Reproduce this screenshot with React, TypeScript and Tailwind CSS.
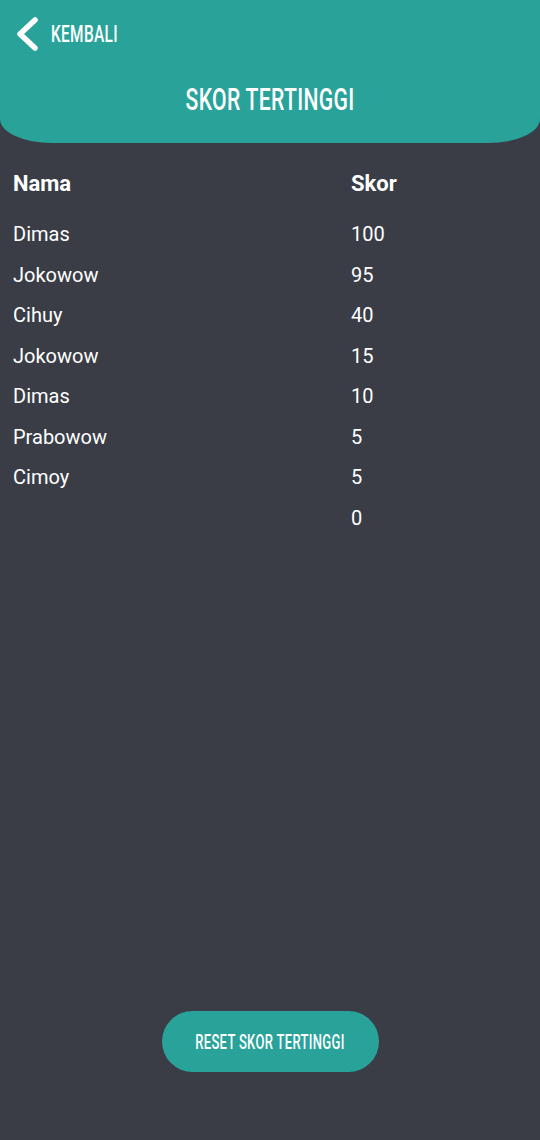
import React from "react";

const rows: [string, string][] = [
  ["Dimas", "100"],
  ["Jokowow", "95"],
  ["Cihuy", "40"],
  ["Jokowow", "15"],
  ["Dimas", "10"],
  ["Prabowow", "5"],
  ["Cimoy", "5"],
  ["", "0"],
];

const cond: React.CSSProperties = { fontFamily: "Roboto, 'Liberation Sans', sans-serif" };

export default function App() {
  return (
    <div className="w-[540px] h-[1140px] bg-[#3a3d46] flex flex-col" style={{ fontFamily: "Roboto, 'Liberation Sans', sans-serif" }}>
      <div className="h-[143px] bg-[#29a39a] rounded-b-[52px_24px] flex flex-col">
        <div className="h-[68px] flex items-center pl-[15px]">
          <svg width="24" height="34" viewBox="0 0 24 34" className="shrink-0">
            <path d="M20 3 L5 17 L20 31" fill="none" stroke="#fff" strokeWidth="5.5" strokeLinecap="round" strokeLinejoin="round" />
          </svg>
          <div className="ml-[12px] w-[70px] flex">
            <span style={cond} className="inline-block origin-left scale-x-[0.67] text-white font-medium text-[23px] leading-none tracking-[0.5px] whitespace-nowrap">KEMBALI</span>
          </div>
        </div>
        <div className="flex justify-center mt-[-1px]">
          <span style={cond} className="inline-block scale-x-[0.66] text-white font-medium text-[32px] leading-[64px] whitespace-nowrap tracking-[0.5px]">SKOR TERTINGGI</span>
        </div>
      </div>
      <div className="px-[13px] pt-[20px]">
        <div className="flex h-[40px] items-center text-white font-bold text-[22px]">
          <div className="w-[338px]">Nama</div>
          <div>Skor</div>
        </div>
        <div className="mt-[11px]">
          {rows.map((r, i) => (
            <div key={i} className="flex h-[40.5px] items-center text-white text-[20px]">
              <div className="w-[338px]">{r[0]}</div>
              <div>{r[1]}</div>
            </div>
          ))}
        </div>
      </div>
      <div className="flex-1" />
      <div className="flex justify-center pb-[68px]">
        <div className="w-[217px] h-[61px] rounded-full bg-[#29a39a] flex items-center justify-center">
          <span style={cond} className="inline-block scale-x-[0.65] text-white font-medium text-[20px] whitespace-nowrap tracking-[0.5px]">RESET SKOR TERTINGGI</span>
        </div>
      </div>
    </div>
  );
}
